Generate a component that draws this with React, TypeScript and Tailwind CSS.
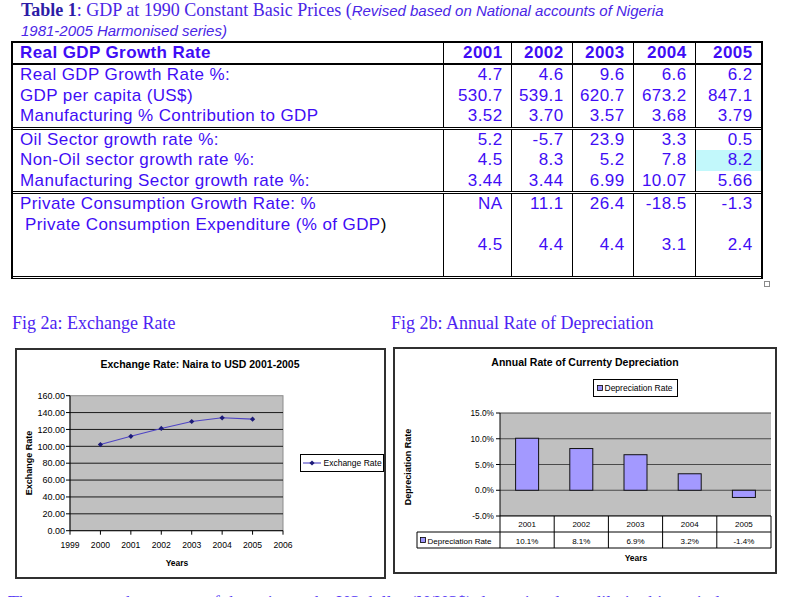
import React from 'react';

const SANS = '"Liberation Sans", Arial, sans-serif';

const cols = ['2001', '2002', '2003', '2004', '2005'];

type Group = { labels: React.ReactNode[]; values: string[][]; cls: string; highlight?: [number, number] };

const groups: Group[] = [
  {
    labels: ['Real GDP Growth Rate %:', 'GDP per capita (US$)', 'Manufacturing % Contribution to GDP'],
    values: [
      ['4.7', '530.7', '3.52'],
      ['4.6', '539.1', '3.70'],
      ['9.6', '620.7', '3.57'],
      ['6.6', '673.2', '3.68'],
      ['6.2', '847.1', '3.79'],
    ],
    cls: 'border-b-[3px] border-double border-black',
  },
  {
    labels: ['Oil Sector growth rate %:', 'Non-Oil sector growth rate %:', 'Manufacturing Sector growth rate %:'],
    values: [
      ['5.2', '4.5', '3.44'],
      ['-5.7', '8.3', '3.44'],
      ['23.9', '5.2', '6.99'],
      ['3.3', '7.8', '10.07'],
      ['0.5', '8.2', '5.66'],
    ],
    cls: 'border-b-[3px] border-double border-black',
    highlight: [4, 1],
  },
  {
    labels: [
      'Private Consumption Growth Rate: %',
      <span key="p" className="pl-[5px]">
        Private Consumption Expenditure (% of GDP<span className="text-black">)</span>
      </span>,
      '',
      '',
    ],
    values: [
      ['NA', '', '4.5', ''],
      ['11.1', '', '4.4', ''],
      ['26.4', '', '4.4', ''],
      ['-18.5', '', '3.1', ''],
      ['-1.3', '', '2.4', ''],
    ],
    cls: 'border-b-[3px] border-double border-black',
  },
];

const GRID = 'grid grid-cols-[430px_68px_61px_61px_62px_66px]';

function Table() {
  return (
    <div className="relative ml-[11px] w-[752px]">
      <div className="border-l-2 border-r-2 border-t-2 border-black font-['Liberation_Sans',Arial,sans-serif] text-[17px] tracking-[0.4px] text-[#3f0df5]">
        <div className={`${GRID} border-b-2 border-black font-bold leading-[20px] h-[22px]`}>
          <div className="pl-[7px]">Real GDP Growth Rate</div>
          {cols.map((c) => (
            <div key={c} className="border-l border-black text-right pr-[8.5px]">
              {c}
            </div>
          ))}
        </div>
        {groups.map((g, gi) => (
          <div key={gi} className={`${GRID} ${g.cls}`}>
            <div className="pl-[7px] leading-[20.5px]">
              {g.labels.map((l, i) => (
                <div key={i} className="h-[20.5px] whitespace-nowrap">
                  {l}
                </div>
              ))}
            </div>
            {g.values.map((col, ci) => (
              <div key={ci} className="border-l border-black leading-[20.5px]">
                {col.map((v, ri) => (
                  <div
                    key={ri}
                    className={`h-[20.5px] text-right pr-[8.5px] ${
                      g.highlight && g.highlight[0] === ci && g.highlight[1] === ri ? 'bg-[#c2f8fb]' : ''
                    }`}
                  >
                    {v}
                  </div>
                ))}
              </div>
            ))}
          </div>
        ))}
      </div>
      <div className="absolute left-[753px] top-[240px] w-[6px] h-[6px] border border-[#8a8a8a] bg-white" />
    </div>
  );
}

function Diamond({ x, y }: { x: number; y: number }) {
  return <polygon points={`${x},${y - 2.6} ${x + 2.6},${y} ${x},${y + 2.6} ${x - 2.6},${y}`} fill="#1c1a78" />;
}

function ExchangeChart() {
  const left = 70;
  const right = 283;
  const top = 395.7;
  const bottom = 530.7;
  const yOf = (v: number) => bottom - (v / 160) * (bottom - top);
  const xOf = (yr: number) => left + ((yr - 1999) * (right - left)) / 7;
  const data: [number, number][] = [
    [2000, 102.1],
    [2001, 111.9],
    [2002, 121.2],
    [2003, 129.4],
    [2004, 133.8],
    [2005, 132.2],
  ];
  const yTicks = [0, 20, 40, 60, 80, 100, 120, 140, 160];
  const years = [1999, 2000, 2001, 2002, 2003, 2004, 2005, 2006];
  return (
    <svg width={367} height={227} viewBox="17 350 367 227" fontFamily={SANS}>
      <text x={200} y={367.5} textAnchor="middle" fontSize={10.5} fontWeight="bold" fill="#000">
        Exchange Rate: Naira to USD 2001-2005
      </text>
      <rect x={left} y={top} width={right - left} height={bottom - top} fill="#c0c0c0" stroke="#8c8c8c" strokeWidth={1} />
      {yTicks.map((t) => (
        <g key={t}>
          {t > 0 && t < 160 && <line x1={left} x2={right} y1={yOf(t)} y2={yOf(t)} stroke="#1a1a1a" strokeWidth={1} />}
          <line x1={left - 4} x2={left} y1={yOf(t)} y2={yOf(t)} stroke="#000" strokeWidth={1} />
          <text x={left - 5} y={yOf(t) + 3.2} textAnchor="end" fontSize={9} fill="#000">
            {t.toFixed(2)}
          </text>
        </g>
      ))}
      <line x1={left} x2={left} y1={top} y2={bottom} stroke="#000" strokeWidth={1} />
      <line x1={left} x2={right} y1={bottom} y2={bottom} stroke="#000" strokeWidth={1} />
      {years.map((yr) => (
        <g key={yr}>
          <line x1={xOf(yr)} x2={xOf(yr)} y1={bottom} y2={bottom + 4} stroke="#000" strokeWidth={1} />
          <text x={xOf(yr)} y={547.5} textAnchor="middle" fontSize={8.6} fill="#000">
            {yr}
          </text>
        </g>
      ))}
      <polyline
        points={data.map(([yr, v]) => `${xOf(yr)},${yOf(v)}`).join(' ')}
        fill="none"
        stroke="#4e44c4"
        strokeWidth={1.1}
      />
      {data.map(([yr, v]) => (
        <Diamond key={yr} x={xOf(yr)} y={yOf(v)} />
      ))}
      <text x={177} y={566} textAnchor="middle" fontSize={8.5} fontWeight="bold" fill="#000">
        Years
      </text>
      <text
        x={0}
        y={0}
        transform="translate(32 463) rotate(-90)"
        textAnchor="middle"
        fontSize={9}
        fontWeight="bold"
        fill="#000"
      >
        Exchange Rate
      </text>
      <rect x={300.5} y={454.5} width={83} height={17} fill="#fff" stroke="#000" strokeWidth={1} />
      <line x1={303} x2={321} y1={463} y2={463} stroke="#4e44c4" strokeWidth={1.1} />
      <Diamond x={312} y={463} />
      <text x={323.5} y={466.2} fontSize={8.5} fill="#000">
        Exchange Rate
      </text>
    </svg>
  );
}

function DepreciationChart() {
  const left = 500;
  const right = 771;
  const top = 413;
  const bottom = 516;
  const vmin = -5;
  const vmax = 15;
  const yOf = (v: number) => bottom - ((v - vmin) / (vmax - vmin)) * (bottom - top);
  const cw = (right - left) / 5;
  const data: [string, number, string][] = [
    ['2001', 10.1, '10.1%'],
    ['2002', 8.1, '8.1%'],
    ['2003', 6.9, '6.9%'],
    ['2004', 3.2, '3.2%'],
    ['2005', -1.4, '-1.4%'],
  ];
  const ticks = [15, 10, 5, 0, -5];
  const barW = 23;
  const zero = yOf(0);
  return (
    <svg width={380} height={223} viewBox="395 349 380 223" fontFamily={SANS}>
      <text x={585} y={365.7} textAnchor="middle" fontSize={10.5} fontWeight="bold" fill="#000">
        Annual Rate of Currenty Depreciation
      </text>
      <rect x={593.5} y={379.5} width={84} height={17} fill="#fff" stroke="#000" strokeWidth={1} />
      <rect x={597.5} y={385.5} width={5} height={5} fill="#9d95fb" stroke="#000" strokeWidth={0.8} />
      <text x={604.5} y={391.3} fontSize={8.5} fill="#000">
        Depreciation Rate
      </text>
      <rect x={left} y={top} width={right - left} height={bottom - top} fill="#c0c0c0" />
      {ticks.map((t) => (
        <g key={t}>
          <line x1={left} x2={right} y1={yOf(t)} y2={yOf(t)} stroke="#4a4a4a" strokeWidth={1} />
          <line x1={left - 4} x2={left} y1={yOf(t)} y2={yOf(t)} stroke="#000" strokeWidth={1} />
          <text x={left - 6} y={yOf(t) + 3} textAnchor="end" fontSize={8.3} fill="#000">
            {t.toFixed(1)}%
          </text>
        </g>
      ))}
      <line x1={left} x2={left} y1={top} y2={bottom} stroke="#000" strokeWidth={1} />
      {data.map(([yr, v], i) => {
        const cx = left + cw * (i + 0.5);
        const y = v >= 0 ? yOf(v) : zero;
        const h = Math.abs(yOf(v) - zero);
        return (
          <rect key={yr} x={cx - barW / 2} y={y} width={barW} height={h} fill="#a399ff" stroke="#111" strokeWidth={1} />
        );
      })}
      <rect x={left} y={bottom} width={right - left} height={16} fill="#fff" />
      <rect x={417} y={532} width={right - 417} height={16} fill="#fff" />
      <line x1={left} x2={right} y1={bottom} y2={bottom} stroke="#000" strokeWidth={1} />
      <line x1={417} x2={right} y1={532} y2={532} stroke="#000" strokeWidth={1} />
      <line x1={417} x2={right} y1={548} y2={548} stroke="#000" strokeWidth={1} />
      <line x1={417} x2={417} y1={532} y2={548} stroke="#000" strokeWidth={1} />
      {[0, 1, 2, 3, 4, 5].map((i) => (
        <line key={i} x1={left + cw * i} x2={left + cw * i} y1={bottom} y2={548} stroke="#000" strokeWidth={1} />
      ))}
      {data.map(([yr, , label], i) => {
        const cx = left + cw * (i + 0.5);
        return (
          <g key={yr}>
            <text x={cx} y={527} textAnchor="middle" fontSize={8} fill="#000">
              {yr}
            </text>
            <text x={cx} y={543.5} textAnchor="middle" fontSize={8} fill="#000">
              {label}
            </text>
          </g>
        );
      })}
      <rect x={420.5} y={537.5} width={5} height={5} fill="#9d95fb" stroke="#000" strokeWidth={0.8} />
      <text x={427.5} y={543.5} fontSize={8} fill="#000">
        Depreciation Rate
      </text>
      <text x={636} y={560.5} textAnchor="middle" fontSize={8.5} fontWeight="bold" fill="#000">
        Years
      </text>
      <text
        x={0}
        y={0}
        transform="translate(411 467) rotate(-90)"
        textAnchor="middle"
        fontSize={9}
        fontWeight="bold"
        fill="#000"
      >
        Depreciation Rate
      </text>
    </svg>
  );
}

export default function App() {
  return (
    <div className="relative w-[801px] h-[597px] overflow-hidden bg-white">
      <div className="pl-[21px] whitespace-nowrap">
        <div className="h-[21px] leading-[20px] font-['Liberation_Serif','Times_New_Roman',serif] text-[18px] text-[#4a26e6]">
          <span className="font-bold text-[#2d1ca6]">Table 1</span>
          <span>: GDP at 1990 Constant Basic Prices (</span>
          <span className="font-['Liberation_Sans',Arial,sans-serif] italic text-[15px]">
            Revised based on National accounts of Nigeria
          </span>
        </div>
        <div className="h-[20px] leading-[20px] font-['Liberation_Sans',Arial,sans-serif] italic text-[15px] text-[#4a26e6]">
          1981-2005 Harmonised series)
        </div>
      </div>

      <Table />

      <div className="flex mt-[34px] font-['Liberation_Serif','Times_New_Roman',serif] text-[18px] text-[#4d24f2]">
        <div className="w-[391px] pl-[12px]">
          <div className="leading-[20px] h-[20px]">Fig 2a: Exchange Rate</div>
          <div className="mt-[15px] ml-[3px] w-[371px] h-[231px] border-2 border-[#303030]">
            <ExchangeChart />
          </div>
        </div>
        <div className="flex-1">
          <div className="leading-[20px] h-[20px]">Fig 2b: Annual Rate of Depreciation</div>
          <div className="mt-[14px] ml-[2px] w-[384px] h-[227px] border-2 border-[#303030]">
            <DepreciationChart />
          </div>
        </div>
      </div>

      <p className="mt-[14px] pl-[8px] whitespace-nowrap font-['Liberation_Serif','Times_New_Roman',serif] text-[18px] leading-[20px] text-[#5a3cf5]">
        The average exchange rate of the naira to the US dollar (N/US$) depreciated steadily in this period.
      </p>
    </div>
  );
}
